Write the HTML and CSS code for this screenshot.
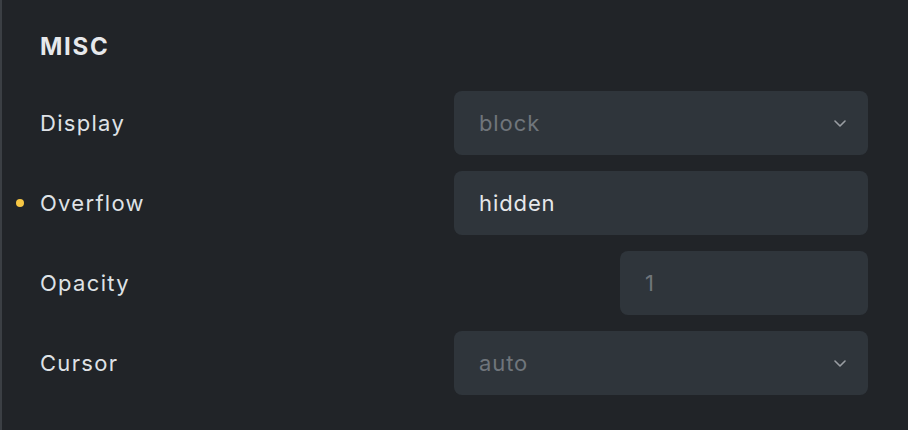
FILE: index.html
```html
<!DOCTYPE html>
<html lang="en">
<head>
    <meta charset="UTF-8">
    <meta name="viewport" content="width=device-width, initial-scale=1.0">
    <title>Misc</title>
    <link rel="stylesheet" href="styles.css">
</head>
<body>

    <!-- Misc panel -->
    <div class="panel">
        <h2 class="panel-title">MISC</h2>

        <div class="row">
            <span class="label">Display</span>
            <div class="field select">
                <span class="value muted">block</span>
                <svg class="chevron" viewBox="0 0 12 7" width="12" height="7"><path d="M1 1l5 5 5-5" fill="none" stroke="currentColor" stroke-width="1.6" stroke-linecap="round" stroke-linejoin="round"/></svg>
            </div>
        </div>

        <div class="row">
            <span class="label changed">Overflow</span>
            <div class="field">
                <span class="value">hidden</span>
            </div>
        </div>

        <div class="row">
            <span class="label">Opacity</span>
            <div class="field small">
                <span class="value muted">1</span>
            </div>
        </div>

        <div class="row">
            <span class="label">Cursor</span>
            <div class="field select">
                <span class="value muted">auto</span>
                <svg class="chevron" viewBox="0 0 12 7" width="12" height="7"><path d="M1 1l5 5 5-5" fill="none" stroke="currentColor" stroke-width="1.6" stroke-linecap="round" stroke-linejoin="round"/></svg>
            </div>
        </div>
    </div>

</body>
</html>
```

FILE: styles.css
```css
/* General Styles */
* {
    margin: 0;
    padding: 0;
    box-sizing: border-box;
    font-family: Inter, "Noto Sans", sans-serif;
}
html, body {
    height: 100%;
}
body {
    background: #212428;
    color: #e3e5e8;
}

/* Panel */
.panel {
    height: 100%;
    border-left: 2px solid #3b3f44;
    padding: 30px 40px 0 38px;
}
.panel-title {
    font-size: 24px;
    font-weight: 700;
    letter-spacing: 1.7px;
    color: #e6e8eb;
    line-height: 34px;
    margin-bottom: 27px;
}

/* Rows */
.row {
    display: flex;
    align-items: center;
    justify-content: space-between;
    height: 64px;
    margin-bottom: 16px;
}
.label {
    position: relative;
    font-size: 22px;
    letter-spacing: 1.3px;
    color: #dfe2e6;
    margin-top: -1px;
}
.label.changed::before {
    content: "";
    position: absolute;
    left: -24px;
    top: 50%;
    width: 8px;
    height: 8px;
    margin-top: -4px;
    border-radius: 50%;
    background: #f7c744;
}

/* Fields */
.field {
    display: flex;
    align-items: center;
    justify-content: space-between;
    width: 414px;
    height: 64px;
    padding: 0 22px 0 25px;
    background: #2f353b;
    border-radius: 8px;
}
.field.small {
    width: 248px;
}
.value {
    font-size: 22px;
    letter-spacing: 0.9px;
    color: #e6e8eb;
    margin-top: -1px;
}
.value.muted {
    color: #70757b;
}
.chevron {
    color: #9a9ea3;
}
```
